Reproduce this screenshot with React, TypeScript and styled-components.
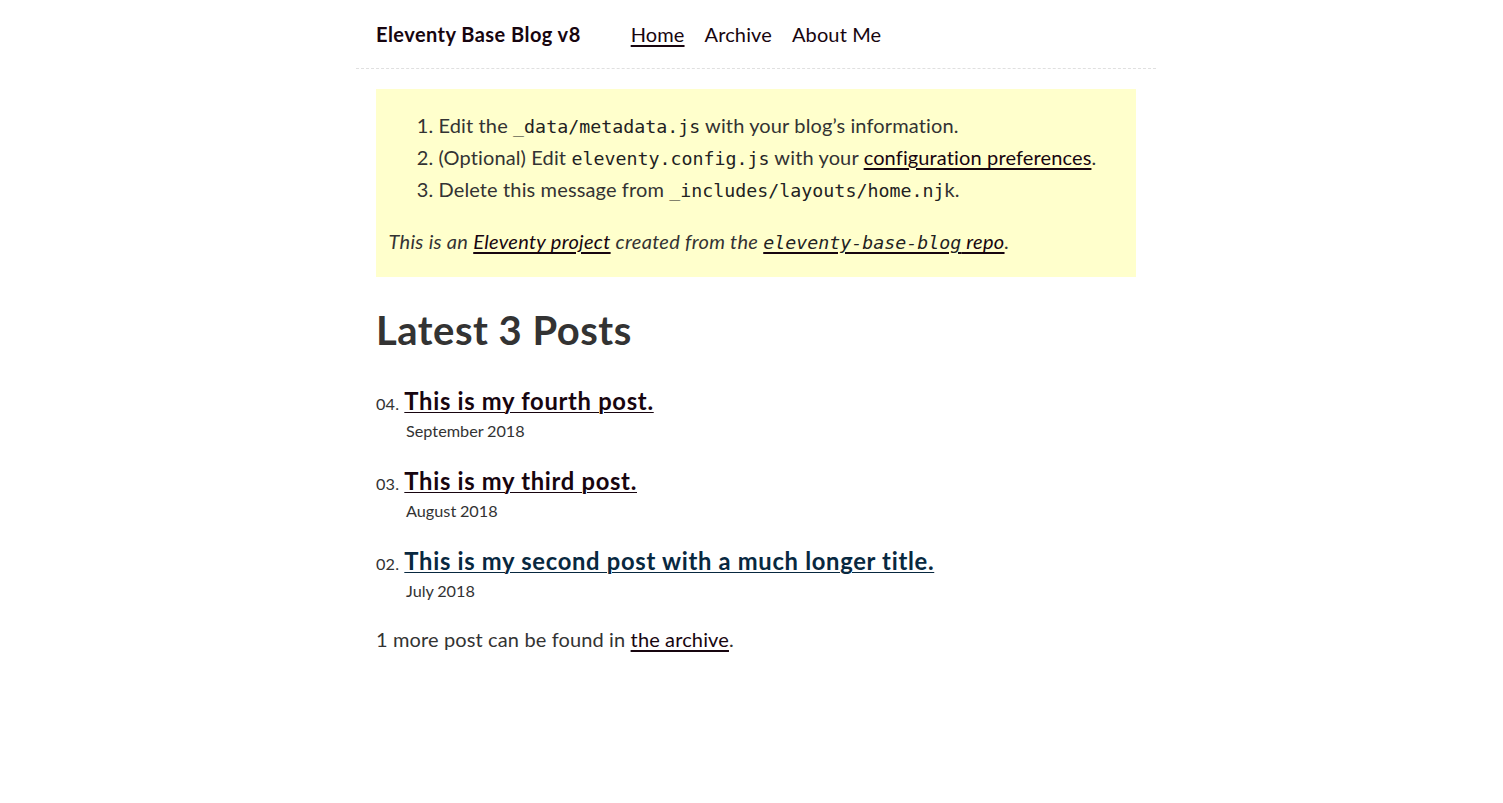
import React from "react";
import styled, { createGlobalStyle } from "styled-components";

const GlobalStyle = createGlobalStyle`
  * { box-sizing: border-box; }
  html, body {
    margin: 0;
    padding: 0;
    background: #fff;
    color: #333;
    font-family: Lato, "Open Sans", sans-serif;
    font-size: 20px;
    letter-spacing: 0.13px;
  }
`;

const Page = styled.div`
  padding-left: 9px;
`;

const Column = styled.div`
  max-width: 800px;
  margin: 0 auto;
`;

const Header = styled.header`
  display: flex;
  flex-wrap: wrap;
  align-items: center;
  gap: 20px 10px;
  padding: 20px;
  border-bottom: 1px dashed #e0e0e0;
  line-height: 28px;
`;

const HomeLink = styled.a`
  font-size: 20px;
  font-weight: 700;
  color: #17050f;
  text-decoration: none;
  letter-spacing: 0.45px;
  margin-right: 40px;
`;

const Nav = styled.ul`
  display: flex;
  list-style: none;
  margin: 0;
  padding: 0;
`;

const NavItem = styled.li`
  margin-right: 20px;
`;

const NavLink = styled.a<{ $current?: boolean }>`
  color: #17050f;
  text-decoration: ${(p) => (p.$current ? "underline" : "none")};
  text-underline-offset: 3px;
`;

const Main = styled.main`
  padding: 20px;
`;

const MessageBox = styled.div`
  background: #ffc;
  color: #333;
  padding: 20px 12.5px;
`;

const Steps = styled.ol`
  margin: 0 0 20px;
  padding-left: 50px;
`;

const Step = styled.li`
  line-height: 32px;
`;

const Code = styled.code`
  font-family: "DejaVu Sans Mono", "Liberation Mono", monospace;
  font-size: 18.3px;
  line-height: 1;
  letter-spacing: 0;
  color: #222;
`;

const Link = styled.a<{ $fresh?: boolean }>`
  color: ${(p) => (p.$fresh ? "#082840" : "#17050f")};
  text-underline-offset: 3px;
`;

const Note = styled.p`
  margin: 0;
  line-height: 32px;
  font-style: italic;
  letter-spacing: 0.3px;
`;

const Title = styled.h1`
  font-size: 40px;
  font-weight: 700;
  line-height: 53px;
  letter-spacing: 0.5px;
  margin: 26.8px 0;
`;

const PostList = styled.ol`
  list-style: none;
  margin: 20px 0;
  padding: 0 0 0 30px;
`;

const PostItem = styled.li`
  display: flex;
  flex-wrap: wrap;
  align-items: baseline;
  margin-bottom: 20px;
  line-height: 1.5;
`;

const PostNumber = styled.span`
  display: inline-block;
  font-size: 16.25px;
  line-height: 100%;
  text-align: right;
  margin-left: -30px;
  color: #333;
`;

const PostLink = styled.a<{ $fresh?: boolean }>`
  font-size: 23.75px;
  font-weight: 700;
  letter-spacing: 0.7px;
  flex-basis: calc(100% - 30px);
  padding-left: 0.22em;
  padding-right: 0.5em;
  color: ${(p) => (p.$fresh ? "#082840" : "#17050f")};
  text-decoration: none;
  span {
    text-decoration: underline;
    text-decoration-thickness: 1px;
    text-underline-offset: 2px;
  }
`;

const PostDate = styled.time`
  font-size: 16.25px;
  color: #333;
  letter-spacing: 0;
  word-spacing: -0.5px;
`;

const Footnote = styled.p`
  margin: 20px 0 0;
  line-height: 1.5;
`;

const posts = [
  { n: "04", title: "This is my fourth post.", date: "September 2018" },
  { n: "03", title: "This is my third post.", date: "August 2018" },
  { n: "02", title: "This is my second post with a much longer title.", date: "July 2018", fresh: true },
];

export default function App() {
  return (
    <Page>
      <GlobalStyle />
      <Column>
        <Header>
          <HomeLink href="#">Eleventy Base Blog v8</HomeLink>
          <Nav>
            <NavItem>
              <NavLink href="#" $current>
                Home
              </NavLink>
            </NavItem>
            <NavItem>
              <NavLink href="#">Archive</NavLink>
            </NavItem>
            <NavItem>
              <NavLink href="#">About Me</NavLink>
            </NavItem>
          </Nav>
        </Header>
        <Main>
          <MessageBox>
            <Steps>
              <Step>
                Edit the <Code>_data/metadata.js</Code> with your blog’s information.
              </Step>
              <Step>
                (Optional) Edit <Code>eleventy.config.js</Code> with your{" "}
                <Link href="#">configuration preferences</Link>.
              </Step>
              <Step>
                Delete this message from <Code>_includes/layouts/home.nj</Code>k.
              </Step>
            </Steps>
            <Note>
              This is an <Link href="#">Eleventy project</Link> created from the{" "}
              <Link href="#">
                <Code>eleventy-base-blog</Code> repo
              </Link>
              .
            </Note>
          </MessageBox>
          <Title>Latest 3 Posts</Title>
          <PostList>
            {posts.map((p) => (
              <PostItem key={p.n}>
                <PostNumber>{p.n}.</PostNumber>
                <PostLink href="#" $fresh={p.fresh}>
                  <span>{p.title}</span>
                </PostLink>
                <PostDate>{p.date}</PostDate>
              </PostItem>
            ))}
          </PostList>
          <Footnote>
            1 more post can be found in <Link href="#">the archive</Link>.
          </Footnote>
        </Main>
      </Column>
    </Page>
  );
}
